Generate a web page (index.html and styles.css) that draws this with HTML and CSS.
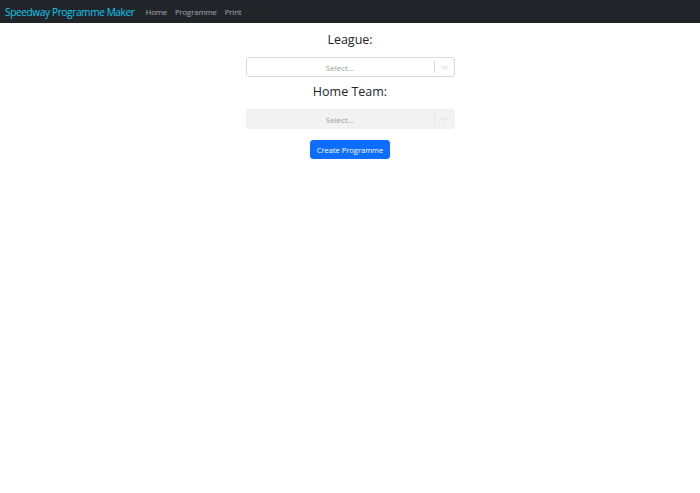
FILE: index.html
```html
<!DOCTYPE html>
<html>
<head>
<meta charset="utf-8">
<link rel="stylesheet" href="styles.css">
</head>
<body>
<nav class="navbar">
  <a class="brand">Speedway Programme Maker</a>
  <a class="nav-link">Home</a>
  <a class="nav-link">Programme</a>
  <a class="nav-link">Print</a>
</nav>
<main class="form">
  <h2 class="label">League:</h2>
  <div class="select">
    <span class="placeholder">Select...</span>
    <span class="sep"></span>
    <span class="chev"><svg width="7" height="5" viewBox="0 0 7 5"><path d="M1 1.2 L3.5 3.7 L6 1.2" fill="none" stroke="#c8c8c8" stroke-width="1"/></svg></span>
  </div>
  <h2 class="label">Home Team:</h2>
  <div class="select disabled">
    <span class="placeholder">Select...</span>
    <span class="sep"></span>
    <span class="chev"><svg width="7" height="5" viewBox="0 0 7 5"><path d="M1 1.2 L3.5 3.7 L6 1.2" fill="none" stroke="#d0d0d0" stroke-width="1"/></svg></span>
  </div>
  <button class="btn">Create Programme</button>
</main>
</body>
</html>
```
FILE: styles.css
```css
body {
  margin: 0;
  font-family: "Open Sans", "Noto Sans", sans-serif;
  background: #fff;
  color: #212529;
}
.navbar {
  height: 23px;
  background: #212529;
  display: flex;
  align-items: center;
  padding: 0 5px;
  gap: 8px;
}
.brand {
  color: #0dcaf0;
  font-size: 10.2px;
  letter-spacing: -0.43px;
  margin-right: 3px;
}
.nav-link {
  color: rgba(255,255,255,0.6);
  font-size: 7.8px;
  letter-spacing: -0.15px;
}
.form {
  display: flex;
  flex-direction: column;
  align-items: center;
  padding-top: 9px;
}
.label {
  font-size: 12.5px;
  font-weight: 500;
  margin: 0 0 9px;
  line-height: 16px;
}
.select {
  width: 207px;
  height: 18px;
  border: 1px solid #d9d9d9;
  border-radius: 3px;
  display: flex;
  align-items: center;
  margin-bottom: 7px;
  background: #fff;
}
.select.disabled {
  background: #f2f2f2;
  border-color: #f0f0f0;
  margin-bottom: 11px;
}
.placeholder {
  flex: 1;
  text-align: center;
  font-size: 8px;
  color: #9a9a9a;
}
.sep {
  width: 1px;
  height: 12px;
  background: #d9d9d9;
}
.disabled .sep { background: #e3e3e3; }
.chev {
  width: 19px;
  display: flex;
  justify-content: center;
  align-items: center;
}
.btn {
  background: #0d6efd;
  color: #fff;
  border: 1px solid #0d6efd;
  border-radius: 3px;
  font-family: inherit;
  font-size: 7.5px;
  height: 19px;
  padding: 0 6px;
}
```
